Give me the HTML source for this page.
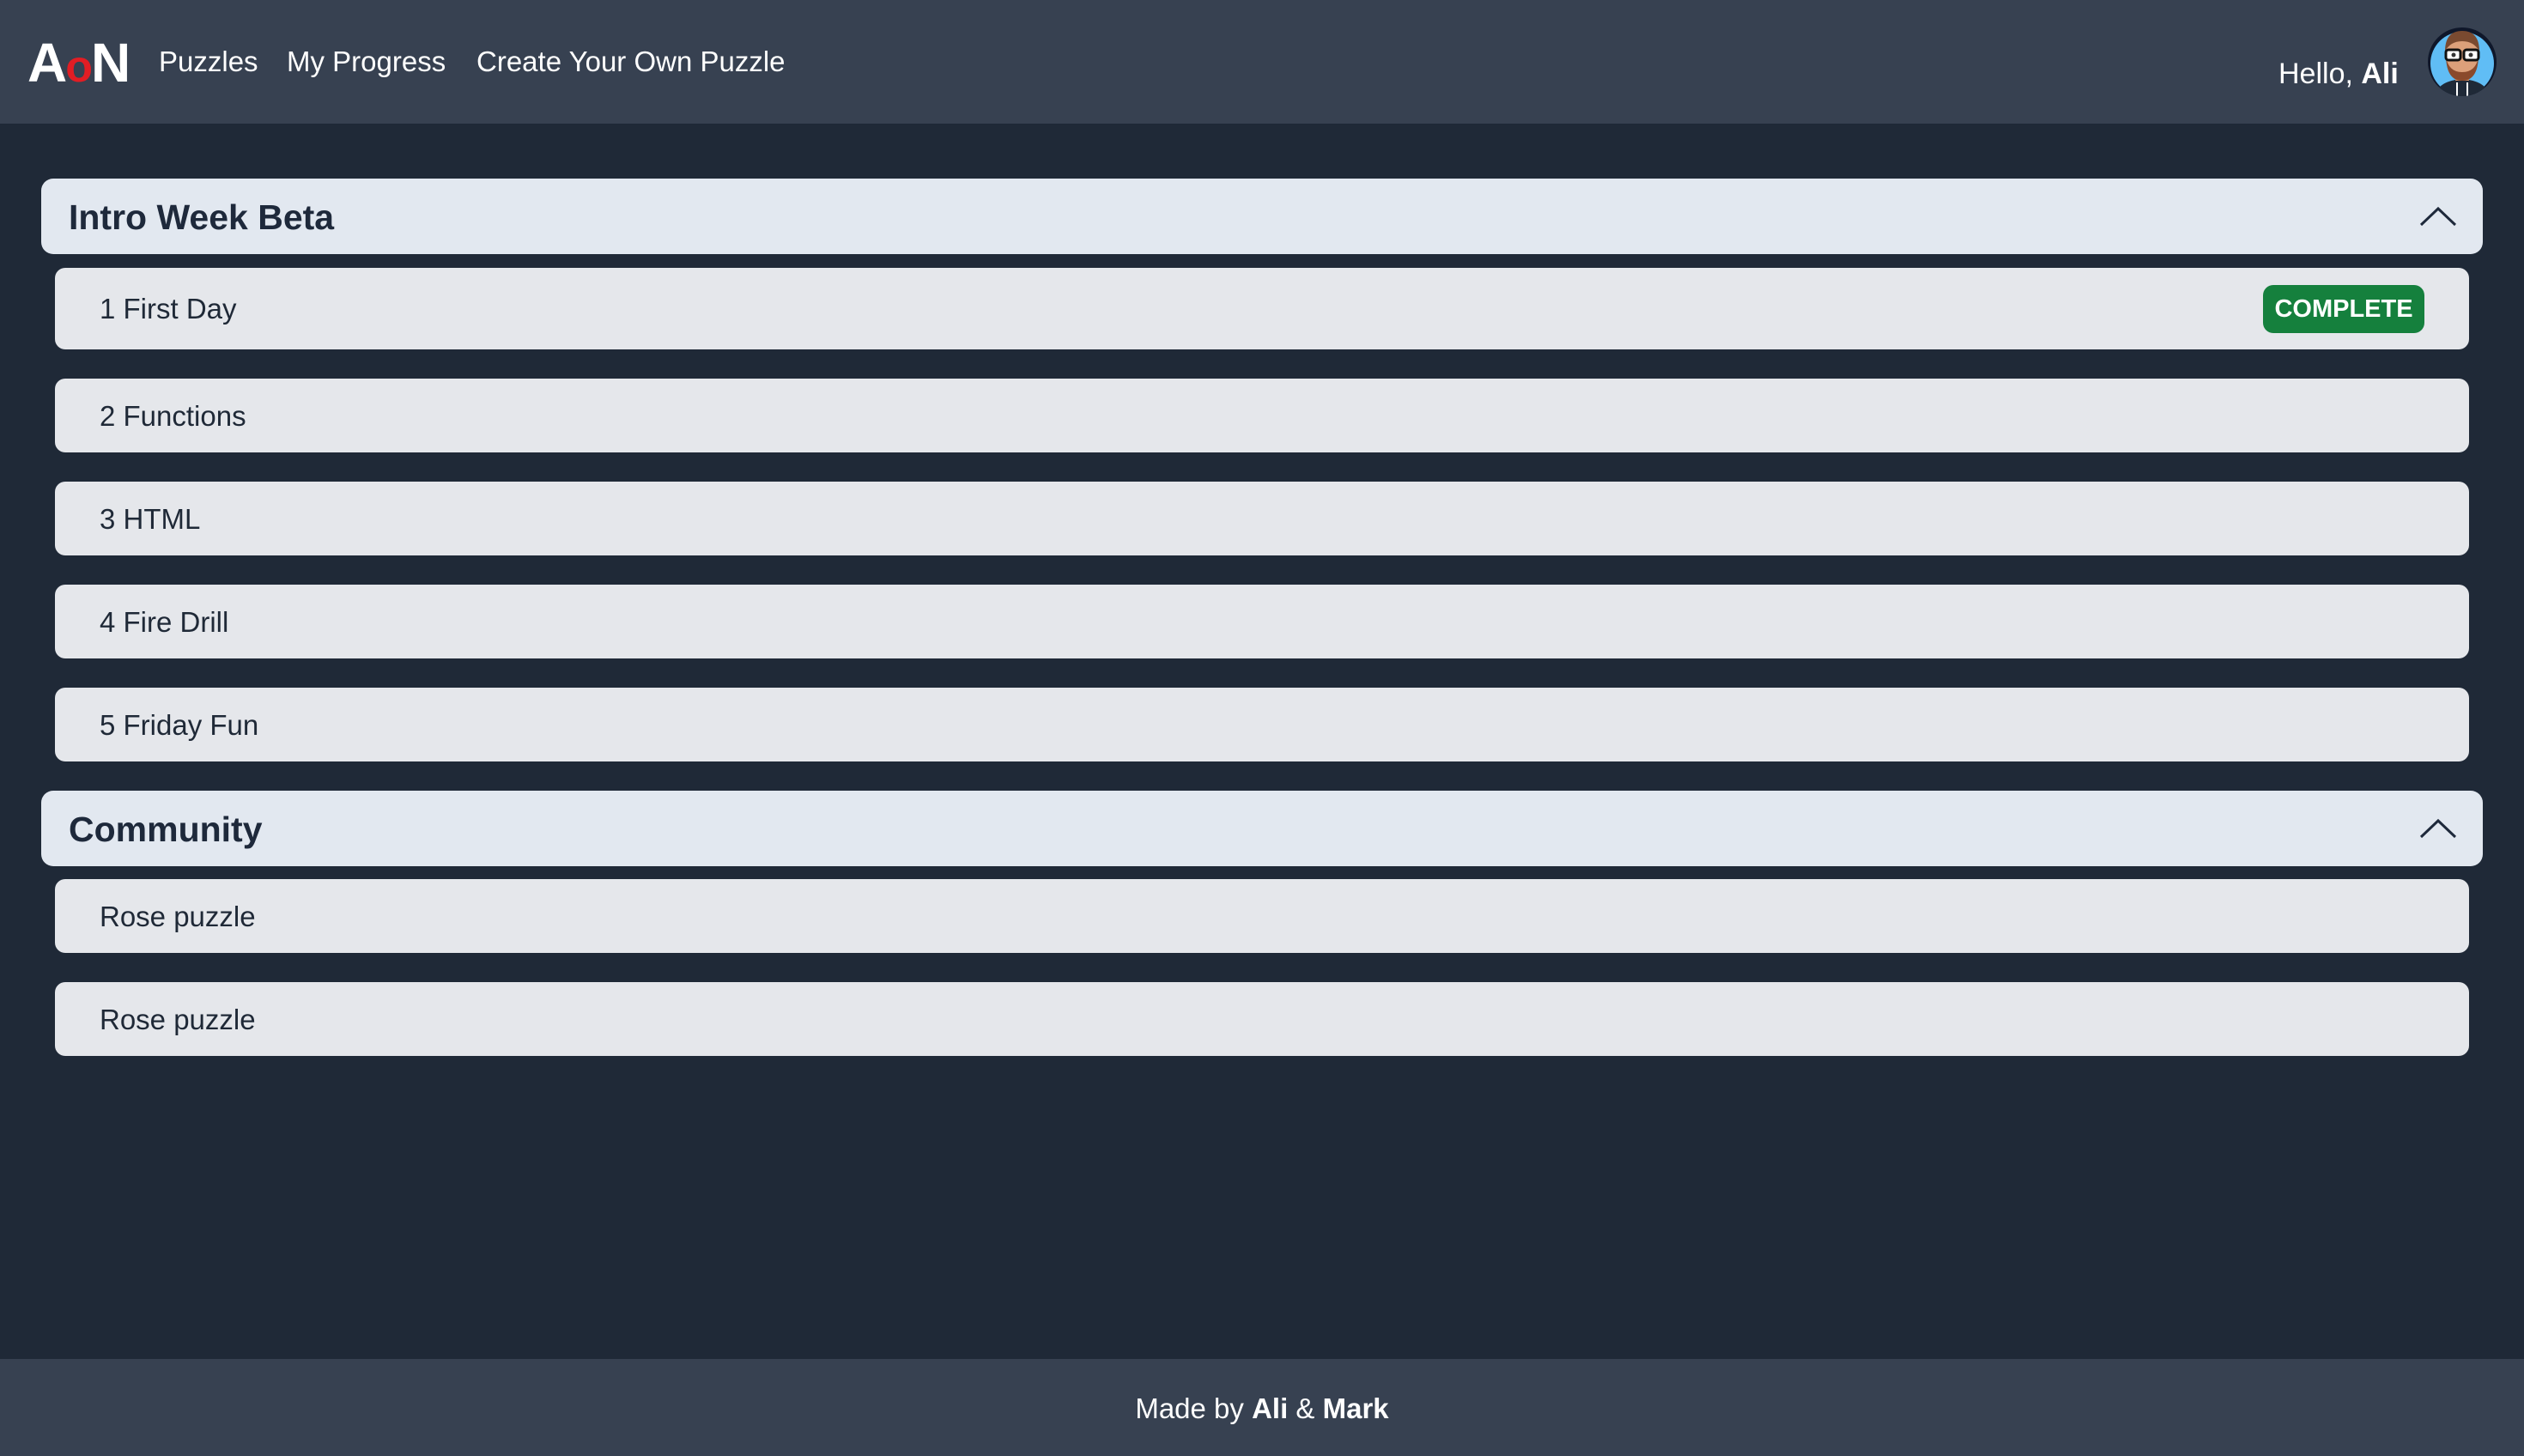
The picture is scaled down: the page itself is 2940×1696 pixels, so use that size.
<!DOCTYPE html>
<html><head><meta charset="utf-8"><style>
*{margin:0;padding:0;box-sizing:border-box}
body{width:2940px;height:1696px;background:#1f2937;font-family:"Liberation Sans",Arial,sans-serif;position:relative;overflow:hidden}
.hdr{position:absolute;left:0;top:0;width:2940px;height:144px;background:#374151}
.logo{position:absolute;left:32px;top:38px;font-size:64px;font-weight:bold;color:#fff;letter-spacing:-2px;line-height:70px}
.logo span{color:#e11d24;font-size:52px}
.nav{position:absolute;top:52px;color:#fff;font-size:33px;line-height:40px}
.hello{position:absolute;left:2654px;top:66px;color:#fff;font-size:34px;line-height:40px}
.av{position:absolute;left:2828px;top:32px;width:80px;height:80px;border-radius:50%;background:#0f172a;overflow:hidden}
.sec{position:absolute;left:48px;width:2844px;height:88px;background:#e2e8f0;border-radius:14px}
.sec .t{position:absolute;left:32px;top:22px;font-size:41px;font-weight:bold;color:#1e293b;line-height:46px}
.sec svg{position:absolute;left:2770px;top:32px}
.item{position:absolute;left:64px;width:2812px;height:86px;background:#e5e7eb;border-radius:12px}
.item .t{position:absolute;left:52px;top:24px;font-size:33px;color:#1f2937;line-height:40px}
.badge{position:absolute;left:2572px;top:20px;width:188px;height:56px;background:#15803d;border-radius:12px;color:#fff;font-weight:bold;font-size:29px;line-height:56px;text-align:center}
.ftr{position:absolute;left:0;top:1583px;width:2940px;height:113px;background:#374151;color:#fff;font-size:33px;text-align:center;line-height:40px;padding-top:38px}
</style></head><body>
<div class="hdr">
<div class="logo">A<span>o</span>N</div>
<div class="nav" style="left:185px">Puzzles</div>
<div class="nav" style="left:334px">My Progress</div>
<div class="nav" style="left:555px">Create Your Own Puzzle</div>
<div class="hello">Hello, <b>Ali</b></div>
<div class="av"><svg width="80" height="80" viewBox="0 0 80 80">
<circle cx="40" cy="42" r="37" fill="#60bdf5"/>
<path d="M8 80 Q12 62 40 60 Q68 62 72 80Z" fill="#1f2937"/>
<rect x="32" y="50" width="16" height="12" fill="#c98a62"/>
<ellipse cx="40" cy="32" rx="19" ry="23" fill="#dca07a"/>
<path d="M21 34 Q22 62 40 62 Q58 62 59 34 Q56 52 40 52 Q24 52 21 34Z" fill="#8a4a2c"/>
<path d="M20 28 Q20 4 40 4 Q60 4 60 28 Q54 16 40 16 Q26 16 20 28Z" fill="#7a4a30"/>
<rect x="21" y="26" width="17" height="12" rx="3" fill="#fff" stroke="#111" stroke-width="3"/>
<rect x="42" y="26" width="17" height="12" rx="3" fill="#fff" stroke="#111" stroke-width="3"/>
<circle cx="30" cy="32" r="2.5" fill="#333"/><circle cx="50" cy="32" r="2.5" fill="#333"/>
<line x1="34" y1="64" x2="34" y2="80" stroke="#fff" stroke-width="2"/>
<line x1="46" y1="64" x2="46" y2="80" stroke="#fff" stroke-width="2"/>
</svg></div>
</div>

<div class="sec" style="top:208px"><div class="t">Intro Week Beta</div><svg width="44" height="24" viewBox="0 0 44 24"><path d="M2 22 L22 3 L42 22" fill="none" stroke="#1e293b" stroke-width="3"/></svg></div>
<div class="item" style="top:312px;height:95px"><div class="t" style="top:28px">1 First Day</div><div class="badge">COMPLETE</div></div>
<div class="item" style="top:441px"><div class="t">2 Functions</div></div>
<div class="item" style="top:561px"><div class="t">3 HTML</div></div>
<div class="item" style="top:681px"><div class="t">4 Fire Drill</div></div>
<div class="item" style="top:801px"><div class="t">5 Friday Fun</div></div>
<div class="sec" style="top:921px"><div class="t">Community</div><svg width="44" height="24" viewBox="0 0 44 24"><path d="M2 22 L22 3 L42 22" fill="none" stroke="#1e293b" stroke-width="3"/></svg></div>
<div class="item" style="top:1024px"><div class="t">Rose puzzle</div></div>
<div class="item" style="top:1144px"><div class="t">Rose puzzle</div></div>

<div class="ftr">Made by <b>Ali</b> &amp; <b>Mark</b></div>
</body></html>
